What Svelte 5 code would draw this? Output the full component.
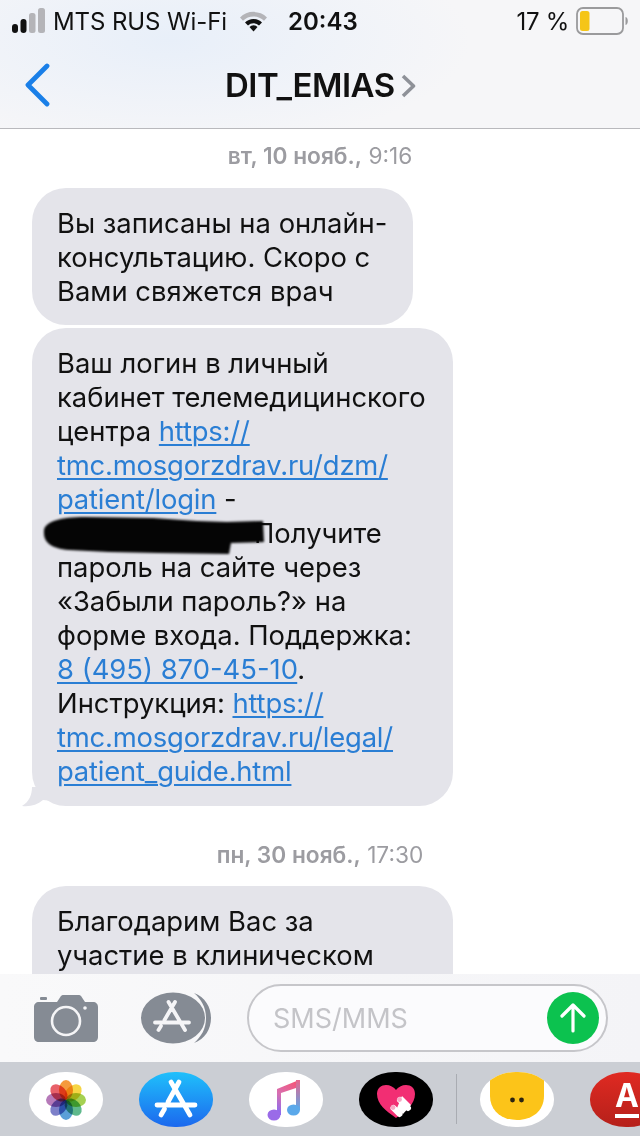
<script>
  // screenshot of the Messages thread, nothing interactive here
  const petals = [
    { a: 0, c: "#f59a3c" },
    { a: 45, c: "#f6d544" },
    { a: 90, c: "#a5d152" },
    { a: 135, c: "#5fb98c" },
    { a: 180, c: "#5a9fd8" },
    { a: 225, c: "#7d80c9" },
    { a: 270, c: "#b67ab9" },
    { a: 315, c: "#e8616a" }
  ];
</script>

<div class="phone">
  <header class="top">
    <div class="status">
      <svg class="signal" width="33" height="26" viewBox="0 0 33 26">
        <rect x="0" y="16" width="6" height="9" rx="3" fill="#111" />
        <rect x="8.500" y="11" width="6" height="14" rx="3" fill="#111" />
        <rect x="17" y="5" width="6.500" height="20" rx="2.500" fill="#b4b4b8" />
        <rect x="26" y="0" width="7" height="25" rx="2.500" fill="#b4b4b8" />
      </svg>
      <span class="carrier">MTS RUS Wi-Fi</span>
      <svg class="wifi" width="27" height="22" viewBox="0 0 27 22">
        <path d="M0 7.500a19 19 0 0 1 27 0l-3 3.200a15 15 0 0 0-21 0z" fill="#b4b4b8" />
        <path d="M5 12.500a12 12 0 0 1 17 0l-3 3a7.600 7.600 0 0 0-11 0z" fill="#111" />
        <path d="M9.500 17a5.500 5.500 0 0 1 8 0l-4 4.500z" fill="#111" />
      </svg>
      <span class="time">20:43</span>
      <span class="charge">17 %</span>
      <svg class="battery" width="52" height="28" viewBox="0 0 52 28">
        <rect x="1" y="1" width="46" height="26" rx="6" fill="none" stroke="#9a9a9c" stroke-width="1.800" />
        <rect x="4" y="4" width="9.500" height="20" rx="2.500" fill="#f5c518" />
        <path d="M49.500 10c1.800.5 2.300 2.200 2.300 4s-.5 3.500-2.300 4z" fill="#9a9a9c" />
      </svg>
    </div>
    <nav class="navbar">
      <svg class="back" width="25" height="44" viewBox="0 0 25 44">
        <path d="M22 3 3 22l19 19" fill="none" stroke="#1a7fe8" stroke-width="4.800" stroke-linecap="round" stroke-linejoin="round" />
      </svg>
      <span class="title">DIT_EMIAS</span>
      <svg class="more" width="15" height="24" viewBox="0 0 15 24">
        <path d="M2 2l10.500 10L2 22" fill="none" stroke="#8e9198" stroke-width="3.600" stroke-linejoin="round" />
      </svg>
    </nav>
  </header>

  <main class="thread">
    <p class="stamp first"><b>вт, 10 нояб.,</b> 9:16</p>

    <div class="bubble short">
      Вы записаны на онлайн-<br />консультацию. Скоро с<br />Вами свяжется врач
    </div>

    <div class="bubble wide tailed">
      Ваш логин в личный<br />
      кабинет телемедицинского<br />
      центра <a class="url" href="#a">https://<br />tmc.mosgorzdrav.ru/dzm/<br />patient/login</a> -<br />
      <span class="hidden-part"></span>Получите<br />
      пароль на сайте через<br />
      «Забыли пароль?» на<br />
      форме входа. Поддержка:<br />
      <a href="#a">8 (495) 870-45-10</a>.<br />
      Инструкция: <a class="url" href="#a">https://<br />tmc.mosgorzdrav.ru/legal/<br />patient_guide.html</a>

      <svg class="scribble" width="222" height="40" viewBox="0 0 222 40">
        <path d="M1 14C3 5 18 1 42 1l68 1 44 3 30 1 36-1 1 21-33 1-2 11-70-1-50-1-40-2C7 32 0 26 1 14z" fill="#050505" />
      </svg>
      <svg class="tail" width="32" height="20" viewBox="0 0 32 20">
        <path d="M11 0C11 8 8 15 1 19c8 1 15-1 21-6l10 1V0z" fill="#e4e4ea" />
      </svg>
    </div>

    <p class="stamp second"><b>пн, 30 нояб.,</b> 17:30</p>

    <div class="bubble wide last">
      Благодарим Вас за<br />участие в клиническом
    </div>
  </main>

  <section class="composer">
    <svg class="camera" width="64" height="48" viewBox="0 0 64 48">
      <path d="M5 8h18l3-4.500C27 1.500 28 1 30 1h14c2 0 3 .5 4 2.500L51 8h8c3 0 5 2 5 5v30c0 3-2 5-5 5H5c-3 0-5-2-5-5V13c0-3 2-5 5-5z" fill="#858b94" />
      <rect x="6" y="3" width="7" height="3" rx="1" fill="#858b94" />
      <circle cx="32" cy="27" r="14" fill="none" stroke="#f5f5f7" stroke-width="2.600" />
      <circle cx="51" cy="14" r="1.800" fill="#f5f5f7" />
    </svg>

    <svg class="apps" width="71" height="52" viewBox="0 0 71 52">
      <ellipse cx="32" cy="26" rx="32" ry="25.500" fill="#858b94" />
      <path d="M53 1c11 4 17 14 17 25S64 47 53 51c7-6 12-14 12-25S60 7 53 1z" fill="#858b94" />
      <g fill="none" stroke="#f5f5f7" stroke-width="3.800" stroke-linecap="round">
        <path d="M34 10 23.500 28M20 34l-2.500 4M27.500 10 44 38M14 30.500h34" />
      </g>
    </svg>

    <div class="field">
      <span class="placeholder">SMS/MMS</span>
      <span class="send">
        <svg width="30" height="32" viewBox="0 0 30 32">
          <path d="M15 29V4M4 14 15 3l11 11" fill="none" stroke="#fff" stroke-width="3.200" stroke-linecap="round" stroke-linejoin="round" />
        </svg>
      </span>
    </div>
  </section>

  <footer class="dock">
    <div class="group">
      <div class="icon plain">
        <svg width="74" height="55" viewBox="0 0 74 55">
          <g style="isolation: isolate">
            {#each petals as p}
              <ellipse class="petal" cx="37" cy="18" rx="7" ry="10" fill={p.c} transform="rotate({p.a} 37 28)" />
            {/each}
          </g>
        </svg>
      </div>
      <div class="icon store">
        <svg width="74" height="55" viewBox="0 0 74 55">
          <g fill="none" stroke="#fff" stroke-width="4.800" stroke-linecap="round">
            <path d="M40 10 29 30M25.500 37 22 43M32 10l19 33M18 33h38" />
          </g>
        </svg>
      </div>
      <div class="icon plain">
        <svg width="74" height="55" viewBox="0 0 74 55">
          <defs>
            <linearGradient id="note" x1="0.700" y1="0" x2="0.200" y2="1">
              <stop offset="0" stop-color="#f4567a" />
              <stop offset="0.550" stop-color="#d86fb0" />
              <stop offset="1" stop-color="#8b6cf0" />
            </linearGradient>
            <linearGradient id="note2" x1="0" y1="0" x2="0" y2="1">
              <stop offset="0" stop-color="#e9658c" />
              <stop offset="1" stop-color="#5aa8ea" />
            </linearGradient>
          </defs>
          <path d="M28 17 50 8v7L32 21v22h-4z" fill="url(#note)" />
          <ellipse cx="25" cy="43" rx="6.500" ry="5.500" fill="#9a6be8" />
          <rect x="47" y="8" width="4" height="30" fill="url(#note2)" />
          <ellipse cx="44.500" cy="38" rx="6.500" ry="5.500" fill="#5aa8ea" />
        </svg>
      </div>
      <div class="icon dark">
        <svg width="74" height="55" viewBox="0 0 74 55">
          <path d="M37 46C27 39 18 32 18 22c0-6 4.500-9 9-9 4 0 8 2 10 5 2-3 6-5 10-5 5 0 9 3 9 9 0 10-9 17-19 24z" fill="#f22e73" />
          <path d="M38 36l6 6 8-9-9-9z" fill="#fff" />
          <path d="M34.500 36l6 6M41 28l8 8" stroke="#fff" stroke-width="6" stroke-linecap="round" />
          <circle cx="34" cy="35.500" r="2.400" fill="#f7a8c4" />
          <circle cx="40.500" cy="27.500" r="2.400" fill="#f7a8c4" />
        </svg>
      </div>
    </div>

    <span class="divider"></span>

    <div class="group">
      <div class="icon plain">
        <svg width="74" height="55" viewBox="0 0 74 55">
          <path d="M10 0h54v24c0 15-12 24-27 24S10 39 10 24z" fill="#fcc419" />
          <circle cx="32.500" cy="28" r="2.400" fill="#2c2410" />
          <circle cx="41.500" cy="28" r="2.400" fill="#2c2410" />
        </svg>
      </div>
      <div class="icon red">
        <span class="alfa">А</span>
      </div>
    </div>
  </footer>
</div>

<style>
  :global(body) {
    margin: 0;
    background: #fff;
  }

  .phone {
    width: 640px;
    height: 1136px;
    display: flex;
    flex-direction: column;
    overflow: hidden;
    font-family: Inter, "Liberation Sans", sans-serif;
    color: #111;
  }

  /* top */
  .top {
    height: 128px;
    flex-shrink: 0;
    border-bottom: 1px solid #b9b9bd;
    background:
      radial-gradient(ellipse 300px 110px at 170px 40px, #e8eff9, rgba(232, 239, 249, 0) 100%),
      #f6f6f8;
  }

  .status {
    height: 42px;
    display: flex;
    align-items: center;
    padding: 0 12px;
    font-size: 24px;
  }

  .signal {
    margin-right: 8px;
  }

  .carrier {
    white-space: nowrap;
    letter-spacing: -0.1px;
  }

  .wifi {
    margin-left: 13px;
  }

  .time {
    margin-left: 21px;
    font-weight: 600;
  }

  .charge {
    margin-left: auto;
    margin-right: 7px;
    white-space: nowrap;
    letter-spacing: -0.3px;
  }

  .navbar {
    height: 86px;
    display: flex;
    align-items: center;
    padding-left: 25px;
    padding-bottom: 0;
    box-sizing: border-box;
  }

  .title {
    margin-left: 175px;
    font-size: 33px;
    font-weight: 600;
    letter-spacing: -0.5px;
  }

  .more {
    margin-left: 6px;
    margin-top: 2px;
  }

  /* messages */
  .thread {
    flex: 1;
    min-height: 0;
    overflow: hidden;
    padding: 0 0 0 32px;
    background: #fff;
  }

  .stamp {
    margin: 0 0 0 -32px;
    text-align: center;
    font-size: 22.7px;
    line-height: 26px;
    color: #9c9ca1;
  }

  .stamp b {
    font-weight: 600;
  }

  .first {
    margin-top: 14px;
    margin-bottom: 19px;
  }

  .second {
    margin-top: 36px;
    margin-bottom: 18px;
  }

  .bubble {
    position: relative;
    box-sizing: border-box;
    background: #e4e4ea;
    border-radius: 34px;
    padding: 18px 25px 18px;
    font-size: 27.4px;
    line-height: 34px;
    white-space: nowrap;
  }

  .short {
    width: 381px;
    height: 137px;
  }

  .wide {
    width: 421px;
    margin-top: 3px;
  }

  .last {
    height: 140px;
  }

  .bubble a {
    color: #2a7ed4;
    text-decoration: underline;
    text-underline-offset: 3px;
    text-decoration-thickness: 2px;
  }

  .bubble a.url {
    letter-spacing: -0.18px;
  }

  .hidden-part {
    display: inline-block;
    width: 197px;
  }

  .scribble {
    position: absolute;
    left: 11px;
    top: 188px;
    filter: blur(1px);
  }

  .tail {
    position: absolute;
    left: -11px;
    bottom: -1px;
  }

  /* input row */
  .composer {
    height: 88px;
    flex-shrink: 0;
    display: flex;
    align-items: center;
    box-sizing: border-box;
    padding-left: 34px;
    background: linear-gradient(90deg, #f9f9fa, #f4f4f7);
  }

  .camera {
    flex-shrink: 0;
  }

  .apps {
    flex-shrink: 0;
    margin-left: 43px;
  }

  .field {
    margin-left: 35px;
    width: 361px;
    height: 68px;
    box-sizing: border-box;
    border: 2px solid #c6c6ca;
    border-radius: 34px;
    background: #fbfbfd;
    display: flex;
    align-items: center;
    justify-content: space-between;
    padding: 0 7px 0 24px;
  }

  .placeholder {
    font-size: 27px;
    color: #c4c4c8;
  }

  .send {
    width: 52px;
    height: 52px;
    border-radius: 50%;
    background: #0cc24f;
    display: flex;
    align-items: center;
    justify-content: center;
  }

  /* app strip */
  .dock {
    height: 74px;
    flex-shrink: 0;
    display: flex;
    align-items: center;
    gap: 23px;
    padding-left: 29px;
    background: #cbced4;
  }

  .group {
    display: flex;
    gap: 36px;
    flex-shrink: 0;
  }

  .divider {
    width: 1px;
    height: 50px;
    flex-shrink: 0;
    background: #a9acb2;
  }

  .icon {
    position: relative;
    width: 74px;
    height: 55px;
    flex-shrink: 0;
    border-radius: 36px / 27px;
    overflow: hidden;
  }

  .icon svg {
    display: block;
  }

  .plain {
    background: #fff;
  }

  .store {
    background: linear-gradient(180deg, #1fc0fb, #1c68ee);
  }

  .dark {
    background: #000;
  }

  .red {
    background: linear-gradient(180deg, #e02a22, #b5201a);
    display: flex;
    justify-content: flex-start;
    padding-left: 25px;
    box-sizing: border-box;
  }

  .alfa {
    display: block;
    height: 37px;
    margin-top: 5px;
    font-size: 32px;
    line-height: 37px;
    font-weight: 700;
    color: #fff;
    border-bottom: 4px solid #fff;
  }

  .petal {
    mix-blend-mode: multiply;
  }
</style>
